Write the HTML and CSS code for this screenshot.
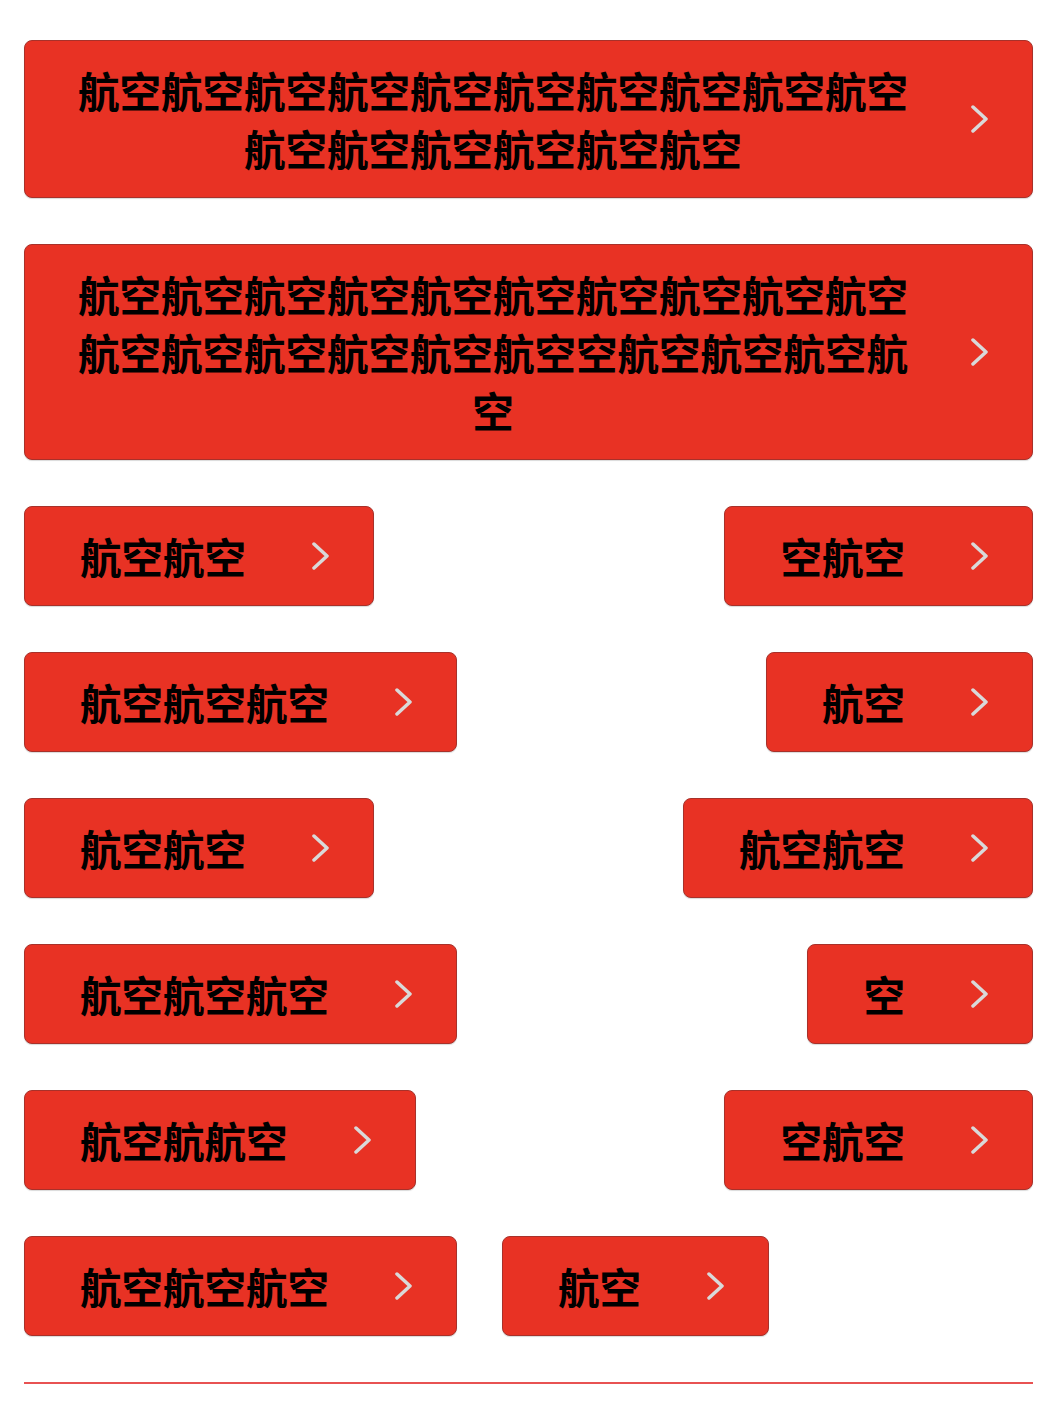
FILE: index.html
```html
<!DOCTYPE html>
<html lang="zh">
<head>
<meta charset="utf-8">
<title>Buttons</title>
<link rel="stylesheet" href="styles.css">
</head>
<body>
<div class="page">
  <a class="btn btn-wide"><span class="label">航空航空航空航空航空航空航空航空航空航空航空航空航空航空航空航空</span><svg class="chev" viewBox="0 0 18 28"><path d="M2 2 L15 14 L2 26"/></svg></a>
  <a class="btn btn-wide"><span class="label">航空航空航空航空航空航空航空航空航空航空航空航空航空航空航空航空空航空航空航空航空</span><svg class="chev" viewBox="0 0 18 28"><path d="M2 2 L15 14 L2 26"/></svg></a>

  <div class="row">
    <a class="btn"><span class="label">航空航空</span><svg class="chev" viewBox="0 0 18 28"><path d="M2 2 L15 14 L2 26"/></svg></a>
    <a class="btn"><span class="label">空航空</span><svg class="chev" viewBox="0 0 18 28"><path d="M2 2 L15 14 L2 26"/></svg></a>
  </div>
  <div class="row">
    <a class="btn"><span class="label">航空航空航空</span><svg class="chev" viewBox="0 0 18 28"><path d="M2 2 L15 14 L2 26"/></svg></a>
    <a class="btn"><span class="label">航空</span><svg class="chev" viewBox="0 0 18 28"><path d="M2 2 L15 14 L2 26"/></svg></a>
  </div>
  <div class="row">
    <a class="btn"><span class="label">航空航空</span><svg class="chev" viewBox="0 0 18 28"><path d="M2 2 L15 14 L2 26"/></svg></a>
    <a class="btn"><span class="label">航空航空</span><svg class="chev" viewBox="0 0 18 28"><path d="M2 2 L15 14 L2 26"/></svg></a>
  </div>
  <div class="row">
    <a class="btn"><span class="label">航空航空航空</span><svg class="chev" viewBox="0 0 18 28"><path d="M2 2 L15 14 L2 26"/></svg></a>
    <a class="btn"><span class="label">空</span><svg class="chev" viewBox="0 0 18 28"><path d="M2 2 L15 14 L2 26"/></svg></a>
  </div>
  <div class="row">
    <a class="btn"><span class="label">航空航航空</span><svg class="chev" viewBox="0 0 18 28"><path d="M2 2 L15 14 L2 26"/></svg></a>
    <a class="btn"><span class="label">空航空</span><svg class="chev" viewBox="0 0 18 28"><path d="M2 2 L15 14 L2 26"/></svg></a>
  </div>
  <div class="row row-start">
    <a class="btn"><span class="label">航空航空航空</span><svg class="chev" viewBox="0 0 18 28"><path d="M2 2 L15 14 L2 26"/></svg></a>
    <a class="btn"><span class="label">航空</span><svg class="chev" viewBox="0 0 18 28"><path d="M2 2 L15 14 L2 26"/></svg></a>
  </div>
  <div class="rule"></div>
</div>
</body>
</html>
```

FILE: styles.css
```css
* { box-sizing: border-box; }

html, body {
  margin: 0;
  padding: 0;
  background: #ffffff;
}

.page {
  width: 1009px;
  margin-left: 24px;
  padding-top: 40px;
  display: flex;
  flex-direction: column;
  gap: 46px;
  font-family: "Noto Sans CJK SC", "Noto Sans", sans-serif;
}

.btn {
  display: inline-flex;
  align-items: center;
  background: #e83224;
  border: 1px solid #a8312a;
  border-radius: 8px;
  padding: 20px 43px 20px 55px;
  color: #000;
  text-decoration: none;
  box-shadow: 0 1px 1px rgba(0, 0, 0, 0.15);
}

.btn-wide {
  display: flex;
  width: 100%;
  padding-left: 52px;
}

.label {
  font-size: 41.5px;
  line-height: 58px;
  font-weight: 600;
  text-align: center;
  word-break: break-all;
}

.btn-wide .label {
  flex: 1;
  min-width: 0;
}

.chev {
  flex: none;
  width: 18px;
  height: 28px;
  margin-left: 66px;
  fill: none;
  stroke: #d9d9d9;
  stroke-width: 3.5;
  stroke-linecap: round;
  stroke-linejoin: round;
}

.btn-wide .chev {
  margin-left: 62px;
}

.row {
  display: flex;
  justify-content: space-between;
  align-items: flex-start;
}

.row-start {
  justify-content: flex-start;
  gap: 45px;
}

.rule {
  height: 2px;
  background: #e85252;
}
```
